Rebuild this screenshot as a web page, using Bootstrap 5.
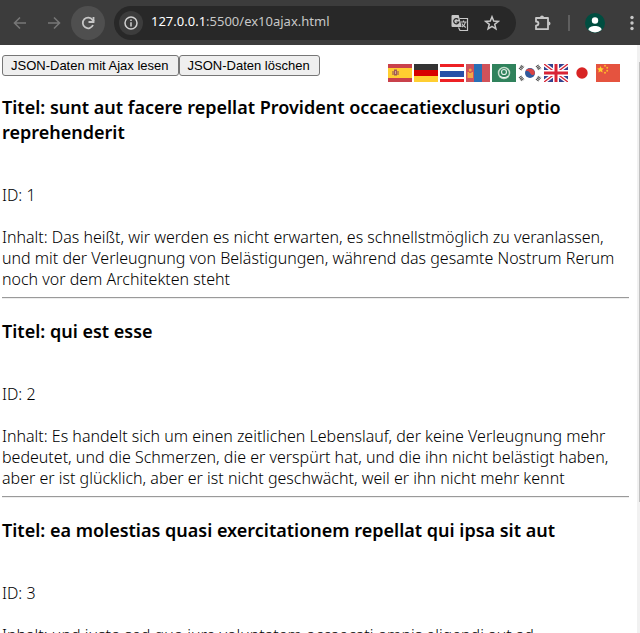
<!DOCTYPE html>
<html lang="de">
<head>
<meta charset="utf-8">
<meta name="viewport" content="width=device-width, initial-scale=1">
<title>ex10ajax</title>
<link href="https://cdn.jsdelivr.net/npm/bootstrap@5.3.0/dist/css/bootstrap.min.css" rel="stylesheet">
<style>
  body { font-family: "Noto Sans", "Open Sans", sans-serif; font-size: 16px; line-height: 21px; font-weight: 300; color: #000; background: #fff; }
  svg { display: block; flex: none; }
  .toolbar { background: #3c3c3c; height: 45px; padding: 0 0 0 3px; }
  .tool-btn { border: 0; padding: 0; background: transparent; color: #c7c7c7; width: 34px; height: 34px; border-radius: 50%; display: flex; align-items: center; justify-content: center; flex: none; }
  .tool-btn:disabled { color: #777; }
  .reload { background: #4f4f4f; }
  .omnibox { background: #282828; height: 34px; border-radius: 17px; padding: 0 14px 0 5px; margin: 0 10px 0 9px; }
  .site-info { width: 24px; height: 24px; background: #3c3c3c; }
  .icon-small { width: 20px; height: 24px; }
  .menu-btn { width: 16px; height: 24px; margin-left: 12px; }
  .url { color: #c7c7c7; font: 400 13px/20px "Noto Sans", sans-serif; padding-bottom: 3px; }
  .divider { width: 2px; height: 16px; background: #5f5f5f; }
  .content { padding: 10px 8px 0 2px; }
  .plain-btn { font: 400 13px/15px "Liberation Sans", Arial, sans-serif; padding: 2px 9px 2px 8px; border: 1px solid #767676; border-radius: 3px; background: #efefef; color: #000; }
  .flags { gap: 2px; padding: 9px 9px 0 0; }
  .controls { height: 20px; }
  .post-title { font-size: 18px; line-height: 25px; font-weight: 600; margin: 20px 0 40px; }
  .post-text { margin: 0 0 7px; }
  .post-id { margin: 0 0 21px; }
  .post-rule { margin: 0; border: 0; border-top: 1px solid #9a9a9a; border-bottom: 1px solid #eee; opacity: 1; }
  .track { width: 3px; background: #f1f1f1; padding: 17px 0 0 2px; }
  .thumb { height: 77%; background: #c1c1c1; }
</style>
<script src="https://cdn.jsdelivr.net/npm/bootstrap@5.3.0/dist/js/bootstrap.bundle.min.js"></script>
</head>
<body class="vh-100 d-flex flex-column overflow-hidden">
<header class="toolbar d-flex align-items-center flex-shrink-0">
  <button class="tool-btn" disabled aria-label="Zurück"><svg width="16" height="16" viewBox="0 0 16 16" fill="none" stroke="currentColor" stroke-width="1.6"><path d="M14 8H3M8 2.500 2.500 8 8 13.500"/></svg></button>
  <button class="tool-btn" disabled aria-label="Vorwärts"><svg width="16" height="16" viewBox="0 0 16 16" fill="none" stroke="currentColor" stroke-width="1.6"><path d="M2 8h11M8 2.500 13.500 8 8 13.500"/></svg></button>
  <button class="tool-btn reload" aria-label="Neu laden"><svg width="16" height="16" viewBox="0 0 16 16" fill="none" stroke="currentColor" stroke-width="1.8"><path d="M13 10a5.300 5.300 0 1 1-.5-5L14 6.500"/><path d="M13.500 2v5h-5"/></svg></button>
  <div class="omnibox d-flex align-items-center flex-grow-1">
    <span class="site-info rounded-circle d-flex align-items-center justify-content-center flex-shrink-0"><svg width="14" height="14" viewBox="0 0 14 14" fill="none" stroke="#d0d0d0" stroke-width="1.500"><circle cx="7" cy="7" r="6"/><path d="M7 6.300V10.500M7 3.500V5"/></svg></span>
    <div class="url flex-grow-1 ms-2"><span class="text-white">127.0.0.1</span>:5500/ex10ajax.html</div>
    <button class="tool-btn icon-small me-2" aria-label="Übersetzen"><svg width="18" height="18" viewBox="0 0 18 18"><path d="M1.500 1h6.200l3 12H1.500A1 1 0 0 1 .5 12V2a1 1 0 0 1 1-1z" fill="#c7c7c7"/><path d="M8.500 4.500h8v12H9l-1.500-3M9.500 8h6M12.500 6.500V8M14.500 8c-.5 2.500-2 4-3.500 5M10.800 9.500c1 2 2.500 3.200 4 4" fill="none" stroke="#c7c7c7" stroke-width="1.200"/><path d="M7.300 5.500A2.600 2.600 0 1 0 7.800 8H5.500" fill="none" stroke="#282828" stroke-width="1.200"/></svg></button>
    <button class="tool-btn icon-small ms-1" aria-label="Lesezeichen"><svg width="16" height="16" viewBox="0 0 16 16" fill="none" stroke="currentColor" stroke-width="1.500"><path d="m8 1.800 1.700 4.300 4.600.3-3.600 2.900 1.200 4.500L8 11.300l-3.900 2.500 1.200-4.500-3.600-2.900 4.600-.3z"/></svg></button>
  </div>
  <button class="tool-btn" aria-label="Erweiterungen"><svg width="18" height="18" viewBox="0 0 18 18"><path d="M2 4h12v11.200H2v-3.500c3.300-.2 3.300-4 0-4.200z" fill="none" stroke="#c7c7c7" stroke-width="1.800" stroke-linejoin="round"/><path d="M6 3.500a2 2 0 0 1 4 0zM14.500 7.500a2 2 0 0 1 0 4z" fill="#c7c7c7"/></svg></button>
  <span class="divider mx-2 flex-shrink-0"></span>
  <button class="tool-btn" aria-label="Profil"><svg width="20" height="20" viewBox="0 0 20 20"><circle cx="10" cy="10" r="10" fill="#004d40"/><circle cx="10" cy="7.500" r="3.200" fill="#fff"/><path d="M3.500 17c-.5-5.300 13.500-5.300 13 0a10 10 0 0 1-13 0z" fill="#fff"/></svg></button>
  <button class="tool-btn menu-btn" aria-label="Menü"><svg width="4" height="16" viewBox="0 0 4 16" fill="currentColor"><circle cx="2" cy="2.500" r="1.700"/><circle cx="2" cy="8" r="1.700"/><circle cx="2" cy="13.500" r="1.700"/></svg></button>
</header>
<div class="d-flex flex-grow-1 overflow-hidden">
  <main class="content flex-grow-1">
    <div class="controls d-flex align-items-start">
      <button class="plain-btn">JSON-Daten mit Ajax lesen</button>
      <button class="plain-btn">JSON-Daten löschen</button>
      <div class="flags d-flex ms-auto">
        <svg width="24" height="18" viewBox="0 0 24 18" role="img" aria-label="Spanisch"><path fill="#c9414b" d="M0 0h24v18H0z"/><path fill="#ffce31" d="M0 4h24v10H0z"/><path fill="#c58a45" d="M4 7h7v4H4z"/><path fill="#a15b55" d="M6 5.500h3v6H6z"/><path fill="#d8a890" d="M7 7h1v3H7z"/></svg>
        <svg width="24" height="18" viewBox="0 0 24 18" role="img" aria-label="Deutsch"><path fill="#333" d="M0 0h24v6H0z"/><path fill="#d80000" d="M0 6h24v6H0z"/><path fill="#ffce31" d="M0 12h24v6H0z"/></svg>
        <svg width="24" height="18" viewBox="0 0 24 18" role="img" aria-label="Thailändisch"><path fill="#ed2024" d="M0 0h24v18H0z"/><path fill="#fff" d="M0 3h24v12H0z"/><path fill="#2850a8" d="M0 7h24v6H0z"/></svg>
        <svg width="24" height="18" viewBox="0 0 24 18" role="img" aria-label="Mongolisch"><path fill="#d0525a" d="M0 0h24v18H0z"/><path fill="#2a6fb5" d="M8 0h8v18H8z"/><path fill="#f0a848" d="M1.500 8h1.500v6H1.500zM5.500 8H7v6H5.500zM3 9h2.500v5H3z"/><circle cx="4.200" cy="6" r="1.500" fill="#f0a848"/></svg>
        <svg width="24" height="18" viewBox="0 0 24 18" role="img" aria-label="Arabisch"><path fill="#30825c" d="M0 0h24v18H0z"/><circle cx="12" cy="9" r="5.500" fill="none" stroke="#c5dccc" stroke-width="1.500"/><circle cx="12" cy="8" r="2.500" fill="none" stroke="#e2eee6" stroke-width="1.200"/><path d="M8 12c2 2 6 2 8 0" fill="none" stroke="#fff"/></svg>
        <svg width="24" height="18" viewBox="0 0 24 18" role="img" aria-label="Koreanisch"><path fill="#fff" d="M0 0h24v18H0z"/><circle cx="12" cy="9" r="5" fill="#315a9c"/><path d="M7.300 7.500a5 5 0 0 1 9.500 2.500c-1.500 2-3.800 1-4.800-1s-3.500-2.500-4.700-1.500z" fill="#d94343"/><g stroke="#444" stroke-width="3.500" stroke-dasharray="1 .6"><path d="m2 5.500 3-4M19 1.500l3 4M2 12.500l3 4M19 16.500l3-4"/></g></svg>
        <svg width="24" height="18" viewBox="0 0 24 18" role="img" aria-label="Englisch"><path fill="#33428f" d="M0 0h24v18H0z"/><path stroke="#fff" stroke-width="4" d="m0 0 24 18M24 0 0 18"/><path stroke="#d82436" stroke-width="1.400" d="m0 0 24 18M24 0 0 18"/><path stroke="#fff" stroke-width="6" d="M12 0v18M0 9h24"/><path stroke="#d82436" stroke-width="3" d="M12 0v18M0 9h24"/></svg>
        <svg width="24" height="18" viewBox="0 0 24 18" role="img" aria-label="Japanisch"><path fill="#fff" d="M0 0h24v18H0z"/><circle cx="12" cy="9" r="5.700" fill="#d82424"/></svg>
        <svg width="24" height="18" viewBox="0 0 24 18" role="img" aria-label="Chinesisch"><path fill="#e5533f" d="M0 0h24v18H0z"/><path fill="#ffd32c" d="m4.500 2 1 2.200 2.400.2-1.800 1.600.5 2.400-2.100-1.200-2.100 1.200.5-2.400L1.100 4.400l2.400-.2z"/><g fill="#ffb52c"><circle cx="9" cy="1.700" r="1"/><circle cx="11.200" cy="3.700" r="1"/><circle cx="11.200" cy="6.700" r="1"/><circle cx="9" cy="8.800" r="1"/></g></svg>
      </div>
    </div>
    <article>
      <h3 class="post-title">Titel: sunt aut facere repellat Provident occaecatiexclusuri optio reprehenderit</h3>
      <p class="post-id">ID: 1</p>
      <p class="post-text">Inhalt: Das heißt, wir werden es nicht erwarten, es schnellstmöglich zu veranlassen, und mit der Verleugnung von Belästigungen, während das gesamte Nostrum Rerum noch vor dem Architekten steht</p>
      <hr class="post-rule">
    </article>
    <article>
      <h3 class="post-title">Titel: qui est esse</h3>
      <p class="post-id">ID: 2</p>
      <p class="post-text">Inhalt: Es handelt sich um einen zeitlichen Lebenslauf, der keine Verleugnung mehr bedeutet, und die Schmerzen, die er verspürt hat, und die ihn nicht belästigt haben, aber er ist glücklich, aber er ist nicht geschwächt, weil er ihn nicht mehr kennt</p>
      <hr class="post-rule">
    </article>
    <article>
      <h3 class="post-title">Titel: ea molestias quasi exercitationem repellat qui ipsa sit aut</h3>
      <p class="post-id">ID: 3</p>
      <p class="post-text">Inhalt: und iusto sed quo iure voluptatem occaecati omnis eligendi aut ad</p>
    </article>
  </main>
  <div class="track flex-shrink-0"><div class="thumb"></div></div>
</div>
</body>
</html>
